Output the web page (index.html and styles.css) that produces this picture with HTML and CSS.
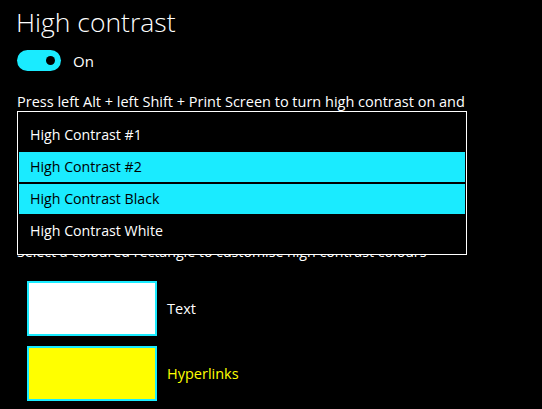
FILE: index.html
```html
<!DOCTYPE html>
<html>
<head>
<meta charset="utf-8">
<link rel="stylesheet" href="styles.css">
</head>
<body>
<main class="page">
  <h1 class="title">High contrast</h1>
  <div class="toggle-row">
    <span class="toggle"><span class="knob"></span></span>
    <span class="toggle-label">On</span>
  </div>
  <p class="desc">Press left Alt + left Shift + Print Screen to turn high contrast on and</p>
  <div class="menu">
    <div class="menu-item">High Contrast #1</div>
    <div class="menu-item active">High Contrast #2</div>
    <div class="menu-item active">High Contrast Black</div>
    <div class="menu-item">High Contrast White</div>
  </div>
  <p class="hint">Select a coloured rectangle to customise high contrast colours</p>
  <div class="swatches">
    <div class="swatch-row">
      <span class="swatch white"></span>
      <span class="swatch-label">Text</span>
    </div>
    <div class="swatch-row">
      <span class="swatch yellow"></span>
      <span class="swatch-label link">Hyperlinks</span>
    </div>
  </div>
</main>
</body>
</html>
```
FILE: styles.css
```css
html, body {
  margin: 0;
  padding: 0;
  background: #000;
}
body {
  width: 542px;
  height: 409px;
  overflow: hidden;
  font-family: "Open Sans", "Noto Sans", sans-serif;
  color: #fff;
}
.page {
  padding: 0 0 0 17px;
  width: 460px;
}
.title {
  margin: 0 0 0 -1px;
  padding-top: 4px;
  font-size: 26.5px;
  font-weight: 300;
  line-height: 36px;
}
.toggle-row {
  display: flex;
  align-items: center;
  gap: 12px;
  margin-top: 10px;
  height: 21px;
}
.toggle {
  width: 44px;
  height: 21px;
  border-radius: 11px;
  background: #1aebff;
  position: relative;
  display: block;
}
.knob {
  position: absolute;
  right: 6px;
  top: 6px;
  width: 9px;
  height: 9px;
  border-radius: 50%;
  background: #000;
}
.toggle-label {
  font-size: 15px;
}
.desc {
  margin: 21px 0 0;
  font-size: 14.5px;
  line-height: 20px;
  white-space: nowrap;
}
.menu {
  position: relative;
  z-index: 1;
  margin: -1px 0 -13px;
  width: 446px;
  border: 1px solid #fff;
  background: #000;
  padding: 8px 1px;
  display: flex;
  flex-direction: column;
  gap: 2px;
}
.menu-item {
  height: 30px;
  line-height: 30px;
  padding-left: 11px;
  font-size: 14.2px;
  color: #fff;
}
.menu-item.active {
  background: #1aebff;
  color: #000;
}
.hint {
  margin: 0;
  font-size: 14.2px;
  line-height: 20px;
  white-space: nowrap;
}
.swatches {
  display: flex;
  flex-direction: column;
  gap: 10px;
  margin-top: 19px;
  padding-left: 10px;
}
.swatch-row {
  display: flex;
  align-items: center;
  gap: 10px;
}
.swatch {
  display: block;
  width: 126px;
  height: 51px;
  border: 2px solid #1aebff;
}
.swatch.white { background: #fff; }
.swatch.yellow { background: #ffff00; }
.swatch-label {
  font-size: 14.5px;
}
.swatch-label.link { color: #ffff00; }
```
